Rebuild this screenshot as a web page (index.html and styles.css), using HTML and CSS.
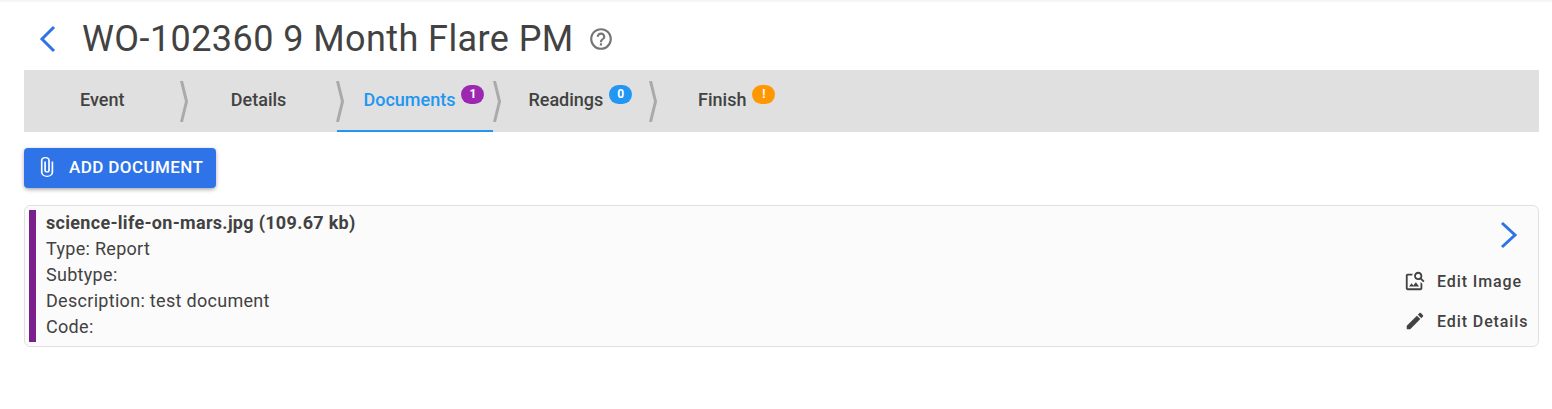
FILE: index.html

```html
<!doctype html>
<html>
<head>
	<meta charset='utf-8'>
	<title>WO-102360 9 Month Flare PM</title>
	<link rel="stylesheet" href="styles.css">
</head>
<body>
<div class='page'>
	<div class='title-row'>
		<svg class='back-icon' viewBox='0 0 17 28'><polyline points='15,2 3,14 15,26'/></svg>
		<h1 class='title'>WO-102360 9 Month Flare PM</h1>
		<svg class='help-icon' viewBox='0 0 24 24'><path d='M11,18H13V16H11V18M12,2A10,10 0 0,0 2,12A10,10 0 0,0 12,22A10,10 0 0,0 22,12A10,10 0 0,0 12,2M12,20C7.59,20 4,16.41 4,12C4,7.59 7.59,4 12,4C16.41,4 20,7.59 20,12C20,16.41 16.41,20 12,20M12,6A4,4 0 0,0 8,10H10A2,2 0 0,1 12,8A2,2 0 0,1 14,10C14,12 11,11.75 11,15H13C13,12.75 16,12.5 16,10A4,4 0 0,0 12,6Z'/></svg>
	</div>

	<div class='tabs'>
		<div class='tab'>
			<span class='tab-label'>Event</span>
			<svg class='tab-divider' viewBox='0 0 8 41'><polyline points='1.5,0 6.5,20.5 1.5,41'/></svg>
		</div>
		<div class='tab'>
			<span class='tab-label'>Details</span>
			<svg class='tab-divider' viewBox='0 0 8 41'><polyline points='1.5,0 6.5,20.5 1.5,41'/></svg>
		</div>
		<div class='tab tab-active'>
			<span class='tab-label has-badge'>Documents<span class='badge badge-purple'>1</span></span>
			<svg class='tab-divider' viewBox='0 0 8 41'><polyline points='1.5,0 6.5,20.5 1.5,41'/></svg>
		</div>
		<div class='tab'>
			<span class='tab-label has-badge'>Readings<span class='badge badge-blue'>0</span></span>
			<svg class='tab-divider' viewBox='0 0 8 41'><polyline points='1.5,0 6.5,20.5 1.5,41'/></svg>
		</div>
		<div class='tab'>
			<span class='tab-label has-badge'>Finish<span class='badge badge-orange'>!</span></span>
		</div>
	</div>

	<button class='add-btn'>
		<svg class='add-icon' viewBox='0 0 24 24' preserveAspectRatio='none'><path d='M16.5,6V17.5A4,4 0 0,1 12.5,21.5A4,4 0 0,1 8.5,17.5V5A2.5,2.5 0 0,1 11,2.5A2.5,2.5 0 0,1 13.5,5V15.5A1,1 0 0,1 12.5,16.5A1,1 0 0,1 11.5,15.5V6H10V15.5A2.5,2.5 0 0,0 12.5,18A2.5,2.5 0 0,0 15,15.5V5A4,4 0 0,0 11,1A4,4 0 0,0 7,5V17.5A5.5,5.5 0 0,0 12.5,23A5.5,5.5 0 0,0 18,17.5V6H16.5Z'/></svg>
		Add Document
	</button>

	<div class='doc-card'>
		<div class='doc-bar'></div>
		<div class='doc-info'>
			<div class='doc-name'>science-life-on-mars.jpg (109.67 kb)</div>
			<div>Type: Report</div>
			<div>Subtype:</div>
			<div>Description: test document</div>
			<div>Code:</div>
		</div>
		<div class='doc-actions'>
			<svg class='open-icon' viewBox='0 0 19 28'><polyline points='3,2 16,14 3,26'/></svg>
			<div class='doc-action'>
				<svg viewBox='0 0 24 24'><path d='M18 13v7H4V6h5.02c.05-.71.22-1.38.48-2H4c-1.1 0-2 .9-2 2v14c0 1.1.9 2 2 2h14c1.1 0 2-.9 2-2v-5l-2-2zm-1.5 5h-11l2.75-3.53 1.96 2.36 2.75-3.54zm2.8-9.11c.44-.7.7-1.51.7-2.39C20 4.01 17.99 2 15.5 2S11 4.01 11 6.5s2.01 4.5 4.49 4.5c.88 0 1.7-.26 2.39-.7L21 13.42 22.42 12 19.3 8.89zM15.5 9C14.12 9 13 7.88 13 6.5S14.12 4 15.5 4 18 5.12 18 6.5 16.88 9 15.5 9z'/></svg>
				<span>Edit Image</span>
			</div>
			<div class='doc-action'>
				<svg viewBox='0 0 24 24'><path d='M20.71,7.04C21.1,6.65 21.1,6 20.71,5.63L18.37,3.29C18,2.9 17.35,2.9 16.96,3.29L15.12,5.12L18.87,8.87M3,17.25V21H6.75L17.81,9.93L14.06,6.18L3,17.25Z'/></svg>
				<span>Edit Details</span>
			</div>
		</div>
	</div>
</div>
</body>
</html>
```

FILE: styles.css

```css
*{margin:0;padding:0;box-sizing:border-box;}
body{font-family:Roboto,"Liberation Sans",sans-serif;color:#424242;background:#fff;}
.page{padding:0 13px 0 24px;box-shadow:inset 0 3px 3px -2px #eee;height:409px;overflow:hidden;}

.title-row{display:flex;align-items:center;height:70px;padding:8px 0 0 15px;}
.back-icon{width:17px;height:28px;fill:none;stroke:#2e74e8;stroke-width:3;}
.title{font-size:36px;font-weight:400;letter-spacing:.42px;margin-left:26px;line-height:44px;}
.help-icon{width:26px;height:26px;fill:#757575;margin-left:14px;}

.tabs{display:flex;height:62px;background:#e0e0e0;}
.tab{position:relative;width:156.4px;display:flex;align-items:center;justify-content:center;font-size:18px;font-weight:500;padding-bottom:4px;}
.tab-label{position:relative;}
.tab-label.has-badge{margin-right:11px;}
.tab-active{color:#2196f3;border-bottom:2px solid #2196f3;padding-bottom:2px;}
.tab-divider{position:absolute;left:100%;top:11px;width:8px;height:41px;margin-left:-.5px;fill:none;stroke:#aaa;stroke-width:3;}

.badge{position:absolute;left:100%;top:-4px;margin-left:6px;width:23px;height:19px;border-radius:10px;color:#fff;font-size:12px;font-weight:700;line-height:19px;text-align:center;}
.badge-purple{background:#9c27b0;}
.badge-blue{background:#2196f3;}
.badge-orange{background:#ff9800;}

.add-btn{display:flex;align-items:center;margin-top:16px;height:40px;width:192px;padding:0 0 2px 9px;background:#2e74e8;color:#fff;border:0;border-radius:4px;font-family:inherit;font-size:17px;font-weight:500;letter-spacing:.4px;text-transform:uppercase;box-shadow:0 2px 4px -1px rgba(0,0,0,.3),0 1px 5px rgba(0,0,0,.15);}
.add-icon{width:27px;height:22px;fill:#fff;margin-right:9px;}

.doc-card{display:flex;margin-top:17px;height:142px;padding:4px 10px 4px 4px;background:#fbfbfb;border:1px solid #e0e0e0;border-radius:6px;}
.doc-bar{width:7px;background:#7b1f8c;}
.doc-info{flex:1;padding-left:10px;font-size:18px;letter-spacing:.3px;line-height:26px;}
.doc-name{font-weight:700;}
.doc-actions{display:flex;flex-direction:column;align-items:flex-end;}
.open-icon{width:19px;height:28px;margin:11px 10px 12px 0;fill:none;stroke:#2e74e8;stroke-width:3;}
.doc-action{display:flex;align-items:center;width:124px;height:40px;font-size:16px;font-weight:500;letter-spacing:.9px;white-space:nowrap;}
.doc-action svg{flex:none;width:22px;height:22px;fill:#424242;margin-right:11px;}
```
